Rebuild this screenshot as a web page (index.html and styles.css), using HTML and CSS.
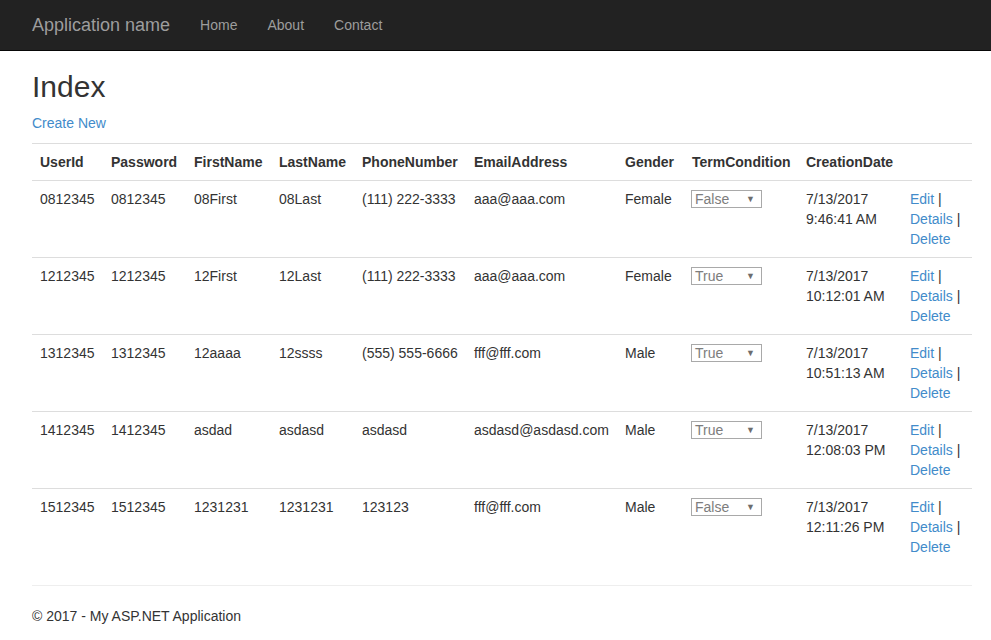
FILE: index.html
```html
<!DOCTYPE html>
<html>
<head>
<meta charset="utf-8">
<title>Index - My ASP.NET Application</title>
<link rel="stylesheet" href="styles.css">
</head>
<body>
<div class="navbar">
  <div class="nav-inner">
    <a class="brand" href="#">Application name</a>
    <a class="nav-link" href="#">Home</a>
    <a class="nav-link" href="#">About</a>
    <a class="nav-link" href="#">Contact</a>
  </div>
</div>
<div class="body-content">
  <h2 class="title">Index</h2>
  <p class="create"><a href="#">Create New</a></p>
  <table class="table">
    <colgroup>
      <col class="c1"><col class="c2"><col class="c3"><col class="c4"><col class="c5">
      <col class="c6"><col class="c7"><col class="c8"><col class="c9"><col class="c10">
    </colgroup>
    <tr>
      <th>UserId</th><th>Password</th><th>FirstName</th><th>LastName</th><th>PhoneNumber</th>
      <th>EmailAddress</th><th>Gender</th><th>TermCondition</th><th>CreationDate</th><th></th>
    </tr>
    <tr>
      <td>0812345</td><td>0812345</td><td>08First</td><td>08Last</td><td>(111) 222-3333</td>
      <td>aaa@aaa.com</td><td>Female</td>
      <td><span class="select"><span class="sel-text">False</span><span class="sel-arrow">▼</span></span></td>
      <td>7/13/2017<br>9:46:41 AM</td>
      <td><a href="#">Edit</a> |<br><a href="#">Details</a> |<br><a href="#">Delete</a></td>
    </tr>
    <tr>
      <td>1212345</td><td>1212345</td><td>12First</td><td>12Last</td><td>(111) 222-3333</td>
      <td>aaa@aaa.com</td><td>Female</td>
      <td><span class="select"><span class="sel-text">True</span><span class="sel-arrow">▼</span></span></td>
      <td>7/13/2017<br>10:12:01 AM</td>
      <td><a href="#">Edit</a> |<br><a href="#">Details</a> |<br><a href="#">Delete</a></td>
    </tr>
    <tr>
      <td>1312345</td><td>1312345</td><td>12aaaa</td><td>12ssss</td><td>(555) 555-6666</td>
      <td>fff@fff.com</td><td>Male</td>
      <td><span class="select"><span class="sel-text">True</span><span class="sel-arrow">▼</span></span></td>
      <td>7/13/2017<br>10:51:13 AM</td>
      <td><a href="#">Edit</a> |<br><a href="#">Details</a> |<br><a href="#">Delete</a></td>
    </tr>
    <tr>
      <td>1412345</td><td>1412345</td><td>asdad</td><td>asdasd</td><td>asdasd</td>
      <td>asdasd@asdasd.com</td><td>Male</td>
      <td><span class="select"><span class="sel-text">True</span><span class="sel-arrow">▼</span></span></td>
      <td>7/13/2017<br>12:08:03 PM</td>
      <td><a href="#">Edit</a> |<br><a href="#">Details</a> |<br><a href="#">Delete</a></td>
    </tr>
    <tr>
      <td>1512345</td><td>1512345</td><td>1231231</td><td>1231231</td><td>123123</td>
      <td>fff@fff.com</td><td>Male</td>
      <td><span class="select"><span class="sel-text">False</span><span class="sel-arrow">▼</span></span></td>
      <td>7/13/2017<br>12:11:26 PM</td>
      <td><a href="#">Edit</a> |<br><a href="#">Details</a> |<br><a href="#">Delete</a></td>
    </tr>
  </table>
  <hr class="rule">
  <footer class="footer">
    <p>© 2017 - My ASP.NET Application</p>
  </footer>
</div>
</body>
</html>
```

FILE: styles.css
```css
* { box-sizing: border-box; }
html, body { margin: 0; padding: 0; }
body {
  font-family: "Liberation Sans", Arial, Helvetica, sans-serif;
  font-size: 14px;
  line-height: 20px;
  color: #333;
  background: #fff;
}
a { color: #428bca; text-decoration: none; }

.navbar {
  height: 51px;
  background: #222;
  border-bottom: 1px solid #080808;
}
.nav-inner {
  display: flex;
  align-items: center;
  height: 50px;
  padding-left: 32px;
}
.brand {
  color: #9d9d9d;
  font-size: 18px;
  line-height: 20px;
  margin-right: 15px;
}
.nav-link {
  color: #9d9d9d;
  font-size: 14px;
  padding: 15px;
  line-height: 20px;
}

.body-content {
  width: 940px;
  margin-left: 32px;
}
.title {
  font-size: 30px;
  font-weight: 500;
  line-height: 33px;
  margin: 19px 0 10px;
}
.create { margin: 0 0 10px; }

.table {
  width: 940px;
  border-collapse: collapse;
  border-spacing: 0;
  table-layout: fixed;
  margin-bottom: 20px;
}
.table th, .table td {
  padding: 8px;
  line-height: 20px;
  vertical-align: top;
  border-top: 1px solid #ddd;
  text-align: left;
  white-space: nowrap;
}
.table th { font-weight: bold; }

.c1 { width: 71px; }
.c2 { width: 83px; }
.c3 { width: 85px; }
.c4 { width: 83px; }
.c5 { width: 112px; }
.c6 { width: 151px; }
.c7 { width: 67px; }
.c8 { width: 114px; }
.c9 { width: 104px; }
.c10 { width: 70px; }

.select {
  display: inline-flex;
  align-items: center;
  width: 71px;
  height: 18px;
  margin: 1px 0 0 -1px;
  border: 1px solid #a9a9a9;
  padding: 0 6px 0 3px;
  color: #7d7d7d;
  font-size: 14px;
  line-height: 16px;
  vertical-align: top;
}
.sel-text { flex: 1; }
.sel-arrow {
  font-size: 9px;
  color: #6d6d6d;
  line-height: 16px;
}

.rule {
  margin: 20px 0;
  border: 0;
  border-top: 1px solid #eee;
  height: 0;
}
.footer p { margin: 0 0 10px; }
```
